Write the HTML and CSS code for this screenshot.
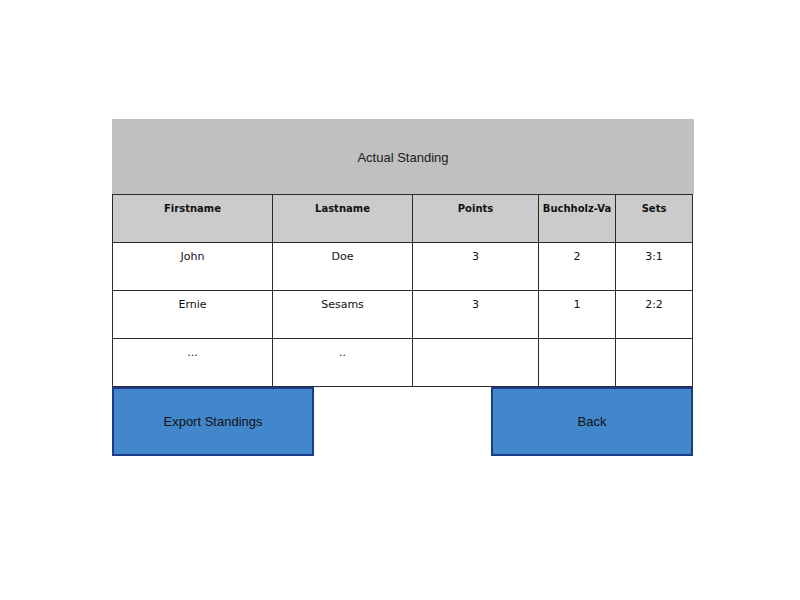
FILE: index.html
```html
<!DOCTYPE html>
<html lang="en">
<head>
    <meta charset="UTF-8">
    <title>Actual Standing</title>
    <link rel="stylesheet" href="styles.css">
</head>
<body>
    <div class="container">
        <div class="title">Actual Standing</div>

        <table class="standings">
            <thead>
                <tr>
                    <th class="c-first">Firstname</th>
                    <th class="c-last">Lastname</th>
                    <th class="c-points">Points</th>
                    <th class="c-buch">Buchholz-Va</th>
                    <th class="c-sets">Sets</th>
                </tr>
            </thead>
            <tbody>
                <tr>
                    <td>John</td>
                    <td>Doe</td>
                    <td>3</td>
                    <td>2</td>
                    <td>3:1</td>
                </tr>
                <tr>
                    <td>Ernie</td>
                    <td>Sesams</td>
                    <td>3</td>
                    <td>1</td>
                    <td>2:2</td>
                </tr>
                <tr>
                    <td>...</td>
                    <td>..</td>
                    <td></td>
                    <td></td>
                    <td></td>
                </tr>
            </tbody>
        </table>

        <div class="actions">
            <button type="button">Export Standings</button>
            <button type="button">Back</button>
        </div>
    </div>
</body>
</html>
```

FILE: styles.css
```css
body {
    margin: 0;
    background: #ffffff;
    font-family: "Liberation Sans", Arial, sans-serif;
}

.container {
    width: 582px;
    padding: 119px 0 0 112px;
}

.title {
    height: 75px;
    padding-top: 1px;
    box-sizing: border-box;
    background: #c0c0c0;
    color: #1a1a1a;
    font-size: 13px;
    display: flex;
    align-items: center;
    justify-content: center;
}

.standings {
    width: 581px;
    border-collapse: collapse;
    table-layout: fixed;
    font-family: "DejaVu Sans", sans-serif;
    font-size: 11px;
    color: #111;
}

.standings th,
.standings td {
    border: 1px solid #2a2a2a;
    height: 48px;
    padding: 0;
    text-align: center;
    vertical-align: top;
    box-sizing: border-box;
    white-space: nowrap;
    overflow: hidden;
}

.standings th {
    background: #cbcbcb;
    font-size: 10px;
    font-weight: bold;
    padding-top: 8px;
}

.standings td {
    padding-top: 7px;
}

.c-first { width: 160px; }
.c-last { width: 140px; }
.c-points { width: 126px; }
.c-buch { width: 77px; }
.c-sets { width: 77px; }

.actions {
    width: 581px;
    display: flex;
    justify-content: space-between;
}

.actions button {
    width: 202px;
    height: 69px;
    background: #4287cc;
    border: 2px solid #1b3a88;
    color: #111;
    font-family: "Liberation Sans", Arial, sans-serif;
    font-size: 13px;
    padding: 0;
}
```
